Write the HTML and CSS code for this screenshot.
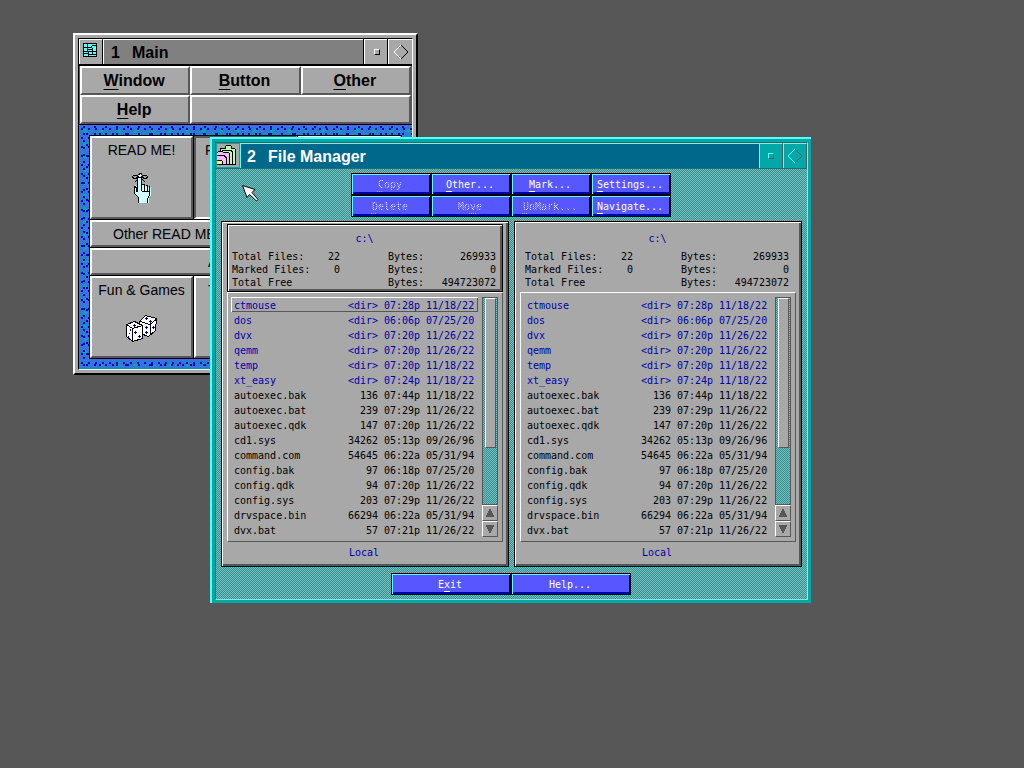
FILE: index.html
```html
<!DOCTYPE html>
<html lang="en">
<head>
  <meta charset="UTF-8">
  <meta name="viewport" content="width=device-width, initial-scale=1.0">
  <title>File Manager</title>
  <link rel="stylesheet" href="styles.css">
</head>
<body>
  <!-- Main window -->
  <section class="window main-window">
    <div class="main-inner">
      <header class="titlebar">
        <button type="button" class="title-icon" aria-label="Window menu">
          <svg width="14" height="14" shape-rendering="crispEdges">
            <rect width="14" height="14" fill="#57ffff"/>
            <path fill="none" stroke="#000" d="M.5.5h13v13h-13zM4.500 1v4M1 4.500h8M8.500 5V3M9 2.500h4M4.500 5v4M1 8.500h12M9.500 5v3M5 6.500h4M5.500 9v4M1 10.500h4M9.500 9v2M6 11.500h7"/>
          </svg>
        </button>
        <h1><span>1</span>Main</h1>
        <button type="button" class="title-button" aria-label="Minimize"><i class="small-square"></i></button>
        <button type="button" class="title-button" aria-label="Maximize">
          <svg width="16" height="16" fill="none">
            <path d="M8 15 1 8 8 1" stroke="#fff"/>
            <path d="M8 1 15 8 8 15" stroke="#000"/>
          </svg>
        </button>
      </header>
      <nav class="menu">
        <button type="button"><u>W</u>indow</button>
        <button type="button"><u>B</u>utton</button>
        <button type="button"><u>O</u>ther</button>
        <button type="button"><u>H</u>elp</button>
        <div class="menu-blank"></div>
      </nav>
      <div class="marble">
        <div class="launcher">
          <button type="button" class="tile">READ ME!
            <svg class="hand" width="20" height="32" shape-rendering="crispEdges">
              <path fill="#d0ffff" d="M6 31v-6l-3-3v-9l2 1v4h1v-14l1-2h2l1 2v9h2l1 1h2l1 1h2l1 1v7l-2 3v5z"/>
              <path fill="none" stroke="#000" d="M6.500 30.500v-5l-4-4v-7l2 1v4h1v-15M9.500 4v15M9.500 12.500h3v7M13.500 13.500h2v6M16.500 14.500h1v9l-2 3v4M10 19.500h7"/>
              <path fill="none" stroke="#000" d="M6 2.500h1v-1h2v1h1M7 5.500h3M6.500 5l-2-2h-3l-1 2 1 1h3l2-1M9.500 5l2-2h3l1 2-1 1h-3l-2-1M6 7l-3 3M10 7l3 3"/>
            </svg>
          </button>
          <button type="button" class="tile tile-pressed">F</button>
          <button type="button" class="tile"></button>
          <button type="button" class="tile tile-wide">Other READ ME</button>
          <button type="button" class="tile"></button>
          <button type="button" class="tile tile-full">A</button>
          <button type="button" class="tile">Fun &amp; Games
            <svg class="dice" width="34" height="30" shape-rendering="crispEdges">
              <path fill="#fff" stroke="#000" d="M14.500 7.500l6-6 11 3-1 12-7 6-8-3z"/>
              <path fill="none" stroke="#000" d="M15 7.500l10 3 6-5M25.500 10v11"/>
              <path fill="#fff" stroke="#000" d="M1.500 10.500l8-3 8 4v13l-10 3-6-5z"/>
              <path fill="none" stroke="#000" d="M1.500 10.500l6 4 10-3M7.500 14v13"/>
              <path fill="#0000a8" d="M8 11h3v1h-3zM9 10h1v3h-1zM9 18h3v1h-3zM10 17h1v3h-1zM13 22h3v1h-3zM14 21h1v3h-1zM5 15h1v2h-1zM4 19h1v1h-1zM3 22h1v2h-1zM20 4h3v1h-3zM21 3h1v3h-1zM24 7h3v1h-3zM25 6h1v3h-1zM20 13h3v1h-3zM21 12h1v3h-1zM20 18h3v1h-3zM21 17h1v3h-1zM27 13h3v1h-3zM28 12h1v3h-1z"/>
            </svg>
          </button>
          <button type="button" class="tile tile-text">T</button>
          <button type="button" class="tile"></button>
        </div>
      </div>
    </div>
  </section>

  <!-- File Manager window -->
  <section class="window file-window">
    <div class="file-inner">
      <header class="titlebar">
        <button type="button" class="title-icon" aria-label="Window menu">
          <svg width="20" height="20" shape-rendering="crispEdges">
            <path fill="#b4ffb4" stroke="#000" d="M3.500 19.500v-16h5v-2l1-1h4l1 1v2h3l1 1v15z"/>
            <path fill="none" stroke="#000" d="M15.500 19v-12l-2-2h-9"/>
            <path fill="#ffb4ff" stroke="#000" d="M-.5 19.500v-12h1l1-1h4l1 1h5l1 1v11z"/>
            <path fill="none" stroke="#000" d="M0 10.500h7l2 2v7"/>
            <path fill="#ffff57" stroke="#000" d="M-.5 15.500h5l1 1v3h-6z"/>
          </svg>
        </button>
        <h1><span>2</span>File Manager</h1>
        <button type="button" class="title-button" aria-label="Minimize"><i class="small-square"></i></button>
        <button type="button" class="title-button" aria-label="Maximize">
          <svg width="16" height="16" fill="none">
            <path d="M8 15 1 8 8 1" stroke="#57ffff"/>
            <path d="M8 1 15 8 8 15" stroke="#575757"/>
          </svg>
        </button>
      </header>
      <div class="file-body">
        <div class="toolbar">
          <button type="button" class="blue-button" disabled><span><u>C</u>opy</span></button>
          <button type="button" class="blue-button"><span><u>O</u>ther...</span></button>
          <button type="button" class="blue-button"><span><u>M</u>ark...</span></button>
          <button type="button" class="blue-button"><span><u>S</u>ettings...</span></button>
          <button type="button" class="blue-button" disabled><span><u>D</u>elete</span></button>
          <button type="button" class="blue-button" disabled><span>Mo<u>v</u>e</span></button>
          <button type="button" class="blue-button" disabled><span><u>U</u>nMark...</span></button>
          <button type="button" class="blue-button"><span><u>N</u>avigate...</span></button>
        </div>
        <div class="panels">
          <article class="panel panel-active"></article>
          <article class="panel"></article>
        </div>
        <div class="actions">
          <button type="button" class="blue-button"><span>E<u>x</u>it</span></button>
          <button type="button" class="blue-button"><span>Help...</span></button>
        </div>
      </div>
    </div>
  </section>

  <svg class="cursor" width="18" height="18">
    <path fill="#fff" stroke="#000" d="M.5 1.500l12.500 4-3 3 6 7-1.500 1.500-7-6.500-2.500 3z"/>
  </svg>

  <script>
    const files = [
      ["ctmouse", "<dir>", "07:28p", "11/18/22"],
      ["dos", "<dir>", "06:06p", "07/25/20"],
      ["dvx", "<dir>", "07:20p", "11/26/22"],
      ["qemm", "<dir>", "07:20p", "11/26/22"],
      ["temp", "<dir>", "07:20p", "11/18/22"],
      ["xt_easy", "<dir>", "07:24p", "11/18/22"],
      ["autoexec.bak", "136", "07:44p", "11/18/22"],
      ["autoexec.bat", "239", "07:29p", "11/26/22"],
      ["autoexec.qdk", "147", "07:20p", "11/26/22"],
      ["cd1.sys", "34262", "05:13p", "09/26/96"],
      ["command.com", "54645", "06:22a", "05/31/94"],
      ["config.bak", "97", "06:18p", "07/25/20"],
      ["config.qdk", "94", "07:20p", "11/26/22"],
      ["config.sys", "203", "07:29p", "11/26/22"],
      ["drvspace.bin", "66294", "06:22a", "05/31/94"],
      ["dvx.bat", "57", "07:21p", "11/26/22"]
    ];

    function fillPanel(panel) {
      panel.innerHTML = `
        <header class="panel-head">
          <h2>c:\\</h2>
          <table class="stats">
            <tr><td>Total Files:</td><td>22</td><td>Bytes:</td><td>269933</td></tr>
            <tr><td>Marked Files:</td><td>0</td><td>Bytes:</td><td>0</td></tr>
            <tr><td>Total Free</td><td></td><td>Bytes:</td><td>494723072</td></tr>
          </table>
        </header>
        <div class="list">
          <table class="files"><tbody></tbody></table>
          <div class="scrollbar">
            <div class="track"><div class="thumb"></div></div>
            <button type="button" aria-label="Scroll up"><svg width="10" height="10" shape-rendering="crispEdges"><path fill="#575757" d="M4 1h2v2h1v2h1v2h1v2h-8v-2h1v-2h1v-2h1z"/></svg></button>
            <button type="button" aria-label="Scroll down"><svg width="10" height="10" shape-rendering="crispEdges"><path fill="#575757" d="M1 1h8v2h-1v2h-1v2h-1v2h-2v-2h-1v-2h-1v-2h-1z"/></svg></button>
          </div>
        </div>
        <p class="drive">Local</p>`;

      const tbody = panel.querySelector(".files tbody");
      files.forEach(file => {
        const row = document.createElement("tr");
        if (file[1] === "<dir>") row.className = "dir";
        file.forEach(value => {
          const cell = document.createElement("td");
          cell.textContent = value;
          row.appendChild(cell);
        });
        tbody.appendChild(row);
      });
    }

    document.querySelectorAll(".panel").forEach(fillPanel);
    document.querySelector(".panel-active .files tr").classList.add("selected");
  </script>
</body>
</html>
```
FILE: styles.css
```css
* {
  box-sizing: border-box;
}

body {
  margin: 0;
  min-height: 100vh;
  background: #575757;
  color: #000;
  font-family: "Liberation Sans", Arial, sans-serif;
  overflow: hidden;
}

button {
  margin: 0;
  padding: 0;
  border: 0;
  border-radius: 0;
  background: #a8a8a8;
  color: inherit;
  font: inherit;
}

h1, h2, p {
  margin: 0;
}

u {
  text-decoration: underline;
  text-decoration-thickness: 1px;
  text-decoration-skip-ink: none;
  text-underline-offset: 3px;
}

.window {
  position: absolute;
}

/* Title bars */
.titlebar {
  display: flex;
}

.titlebar h1 {
  flex: 1;
  padding-left: 7px;
  font-size: 16px;
  font-weight: bold;
  line-height: 25px;
}

.titlebar h1 span {
  display: inline-block;
  width: 21px;
}

.title-icon, .title-button {
  display: flex;
  width: 24px;
  justify-content: center;
  align-items: center;
}

.small-square {
  width: 6px;
  height: 6px;
  border: 1px solid #fff;
  border-right-color: #000;
  border-bottom-color: #000;
}

/* Main window */
.main-window {
  left: 73px;
  top: 33px;
  width: 345px;
  height: 342px;
  padding: 3px;
  background: #a8a8a8;
  border: 2px solid #fff;
  border-right-color: #000;
  border-bottom-color: #000;
}

.main-inner {
  display: flex;
  flex-direction: column;
  height: 100%;
  border: 1px solid #000;
  border-right-color: #fff;
  border-bottom-color: #fff;
}

.main-window .titlebar {
  height: 27px;
  border-bottom: 2px solid #000;
}

.main-window .titlebar h1 {
  background: #808080;
  border-top: 1px solid #fff;
  border-left: 1px solid #fff;
}

.main-window .title-icon, .main-window .title-button {
  border-top: 1px solid #fff;
  border-left: 1px solid #fff;
}

.main-window .title-icon {
  padding: 0 3px 4px 0;
  border-right: 1px solid #000;
}

.main-window .title-button {
  box-shadow: -1px 0 #000;
}

.menu {
  display: grid;
  grid-template-columns: repeat(3, 1fr);
  grid-auto-rows: 29px;
  padding: 0 1px;
  background: #575757;
  border-bottom: 1px solid #000;
}

.menu button, .menu-blank {
  background: #a8a8a8;
  border: 2px solid #fff;
  border-right-color: #575757;
  border-bottom-color: #575757;
  padding-right: 2px;
  font-size: 16px;
  font-weight: bold;
}

.menu-blank {
  grid-column: span 2;
}

.marble {
  flex: 1;
  padding: 10px;
  background:
    radial-gradient(circle at 3px 4px, #0000d0 1px, transparent 1px) 0 0 / 7px 9px,
    radial-gradient(circle at 5px 2px, #0000d0 1px, transparent 1px) 0 0 / 11px 7px,
    radial-gradient(circle at 8px 9px, #0000a8 1px, transparent 1px) 0 0 / 13px 11px,
    radial-gradient(circle at 6px 6px, #00a8a8 2px, transparent 2px) 0 0 / 17px 13px,
    repeating-conic-gradient(#5757ff 0 25%, #0898b8 0 50%) 0 0 / 2px 2px;
}

.launcher {
  display: grid;
  grid-template-columns: repeat(3, 1fr);
  grid-template-rows: 83px 27px 27px 82px;
  gap: 1px;
  width: 313px;
  background: #000;
  border: 1px solid #000;
}

.tile {
  display: flex;
  flex-direction: column;
  align-items: center;
  padding-top: 4px;
  border: 2px solid #fff;
  border-right-color: #575757;
  border-bottom-color: #575757;
  font-size: 14px;
  line-height: 16px;
}

.tile-pressed {
  align-items: flex-start;
  padding-left: 9px;
  border-color: #575757 #fff #fff #575757;
}

.tile-wide, .tile-full, .tile-text {
  align-items: flex-start;
}

.tile-wide {
  grid-column: span 2;
  padding-left: 21px;
}

.tile-full {
  grid-column: span 3;
  padding-left: 116px;
}

.tile-text {
  padding-left: 12px;
}

.hand {
  margin-top: 14px;
}

.dice {
  margin-top: 16px;
}

/* File Manager window */
.file-window {
  left: 210px;
  top: 137px;
  width: 601px;
  padding: 3px;
  background: #00a8a8;
  border: 2px solid #57ffff;
  border-right: 0;
  border-bottom: 0;
  font-family: "DejaVu Sans Mono", "Liberation Mono", monospace;
  font-size: 10px;
}

.file-inner {
  border: 1px solid #575757;
  border-right-color: #57ffff;
  border-bottom-color: #57ffff;
}

.file-window .titlebar {
  height: 26px;
  color: #fff;
  font-family: "Liberation Sans", Arial, sans-serif;
  border-bottom: 1px solid #575757;
}

.file-window .titlebar h1 {
  background: #00688b;
  border-top: 1px solid #57ffff;
  border-left: 1px solid #57ffff;
  padding-left: 6px;
}

.file-window .title-icon {
  padding: 0 2px 2px 0;
  border: 1px solid #00a8a8;
}

.file-window .title-button {
  background: #00a8a8;
  border: 1px solid #57ffff;
  border-right-color: #575757;
  border-bottom: 0;
}

.file-window .small-square {
  border-color: #57ffff #575757 #575757 #57ffff;
}

.file-body {
  padding: 4px 5px;
  background: repeating-conic-gradient(#a8a8a8 0 25%, #00a8a8 0 50%) 0 0 / 2px 2px;
}

.toolbar, .actions {
  display: grid;
  justify-content: center;
  grid-auto-rows: 22px;
  padding-right: 1px;
}

.toolbar {
  grid-template-columns: repeat(4, 80px);
}

.actions {
  grid-template-columns: repeat(2, 120px);
}

.blue-button {
  padding: 2px 2px 0 0;
  background: #5757ff;
  border: 1px solid #000;
  box-shadow: inset 1px 1px #57ffff, inset -1px -2px #0000a8;
  color: #fff;
  line-height: 16px;
}

.blue-button:disabled span {
  background: repeating-conic-gradient(#fff 0 25%, #7070ff 0 50%) 0 0 / 2px 2px;
  -webkit-background-clip: text;
  background-clip: text;
  color: transparent;
}

.blue-button:disabled u {
  text-decoration-color: #a8a8ff;
  text-decoration-style: dotted;
}

.panels {
  display: grid;
  grid-template-columns: 1fr 1fr;
  gap: 5px;
  margin: 4px 0 6px;
}

.panel {
  padding: 2px 5px;
  background: #a8a8a8;
  border: 1px solid #000;
  box-shadow: inset 1px 1px #fff, inset -2px -2px #575757;
}

.panel-head {
  height: 68px;
  padding: 8px 6px 2px 5px;
}

.panel-active .panel-head {
  border: 1px solid #000;
  padding: 7px 5px 1px 4px;
  box-shadow: inset 1px 1px #fff, inset -2px -2px #575757;
}

.panel h2 {
  margin-bottom: 4px;
  color: #0000a8;
  font-size: 10px;
  font-weight: normal;
  line-height: 14px;
  text-align: center;
}

table {
  border-collapse: collapse;
  table-layout: fixed;
}

td {
  padding: 0;
  white-space: nowrap;
}

.stats {
  width: 264px;
  line-height: 13px;
}

.stats td:nth-child(1) {
  width: 78px;
}

.stats td:nth-child(2) {
  width: 30px;
  text-align: right;
}

.stats td:nth-child(3) {
  width: 84px;
  padding-left: 48px;
}

.stats td:nth-child(4) {
  text-align: right;
}

.list {
  display: flex;
  gap: 4px;
  padding: 4px 3px;
  border: 1px solid #fff;
  border-right-color: #575757;
  border-bottom-color: #575757;
}

.files {
  width: 247px;
  line-height: 13px;
}

.files td {
  padding-top: 2px;
}

.files td:nth-child(1) {
  width: 102px;
  padding-left: 3px;
}

.files td:nth-child(2) {
  width: 45px;
  text-align: right;
}

.files td:nth-child(3) {
  width: 42px;
  padding-left: 6px;
}

.files td:nth-child(4) {
  padding-left: 6px;
}

.dir {
  color: #0000a8;
}

.selected td {
  box-shadow: inset 0 1px #fff, inset 0 -1px #575757;
}

.selected td:first-child {
  box-shadow: inset 1px 1px #fff, inset 0 -1px #575757;
}

.selected td:last-child {
  box-shadow: inset 0 1px #fff, inset -1px -1px #575757;
}

.scrollbar {
  display: flex;
  flex-direction: column;
  width: 16px;
}

.track {
  flex: 1;
  padding: 0 1px 0 2px;
  border: 1px solid #575757;
  background: repeating-conic-gradient(#a8a8a8 0 25%, #00a8a8 0 50%) 0 0 / 2px 2px;
}

.thumb {
  height: 150px;
  background: #a8a8a8;
  border: 1px solid #fff;
  border-right-color: #575757;
  border-bottom-color: #575757;
}

.scrollbar button {
  display: flex;
  justify-content: center;
  align-items: center;
  height: 16px;
  border: 1px solid #fff;
  border-right-color: #575757;
  border-bottom-color: #575757;
}

.drive {
  height: 22px;
  padding-right: 2px;
  color: #0000a8;
  line-height: 22px;
  text-align: center;
}

/* Mouse pointer */
.cursor {
  position: absolute;
  left: 242px;
  top: 184px;
}
```
